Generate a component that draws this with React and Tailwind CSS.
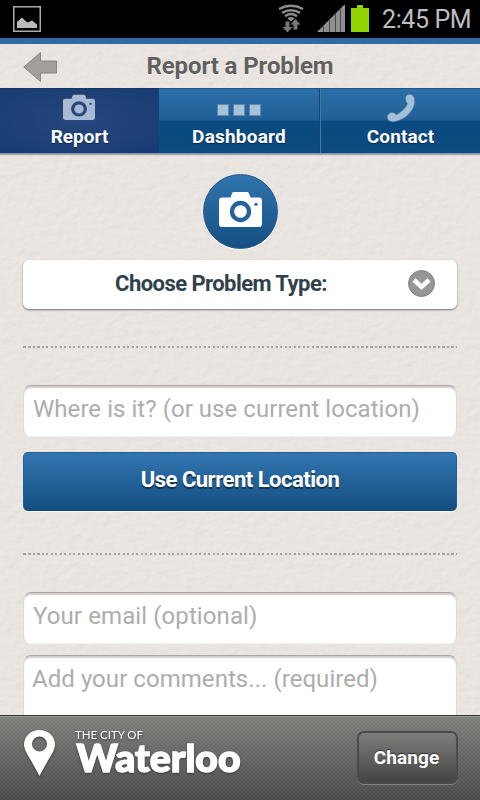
function Paper() {
  return (
    <svg className="pointer-events-none absolute inset-0 h-full w-full" aria-hidden="true">
      <filter id="paper" x="0" y="0" width="100%" height="100%" colorInterpolationFilters="sRGB">
        <feTurbulence type="fractalNoise" baseFrequency="0.11 0.15" numOctaves="3" seed="4" result="n" />
        <feDiffuseLighting in="n" lightingColor="#fffbf7" surfaceScale="0.7" diffuseConstant="1.02">
          <feDistantLight azimuth="235" elevation="65" />
        </feDiffuseLighting>
      </filter>
      <rect width="100%" height="100%" fill="#e9e4e0" />
      <rect width="100%" height="100%" filter="url(#paper)" opacity="0.18" />
    </svg>
  );
}

function Camera({ className, lens }) {
  return (
    <svg className={className} viewBox="0 0 43 35" preserveAspectRatio="none">
      <path
        fill="currentColor"
        d="M3 5.500h8.500l1.600-4.300Q13.500 0 15 0h13q1.500 0 1.900 1.200l1.600 4.300H40q3 0 3 3V32q0 3-3 3H3q-3 0-3-3V8.500q0-3 3-3Z"
      />
      <circle cx="21.500" cy="19.500" r="8.500" fill="none" stroke={lens} strokeWidth="4.300" />
      <circle cx="37" cy="12.300" r="1.600" fill={lens} />
    </svg>
  );
}

function StatusBar() {
  return (
    <div className="flex h-[38px] shrink-0 items-start bg-black">
      <svg className="ml-[13px] mt-[6px] h-[26px] w-[28px]" viewBox="0 0 28 26">
        <rect x="0.750" y="0.750" width="26.500" height="24.500" fill="none" stroke="#a9ada9" strokeWidth="1.500" />
        <path d="M4 22v-6l5-4.500 4 4 2 1 4-2 5 4V22Z" fill="#b9bbb9" />
      </svg>
      <svg className="ml-[235px] h-[38px] w-[98px]" viewBox="276 0 98 38">
        <g fill="none" stroke="#8c8c8c" strokeWidth="2.500">
          <path d="M279 9Q291 2.500 303 9" />
          <path d="M282 12.800Q291 7.500 300 12.800" />
          <path d="M285 16.200Q291 12 297 16.200" />
        </g>
        <path d="M287.300 18.300Q291 15.500 294.700 18.300L291 21.500Z" fill="#8c8c8c" />
        <path d="M285.500 21.500h4v5.500h3l-5 5.500-5-5.500h3Z M293.500 29.500v-5h-3l5-5.500 5 5.500h-3v5Z" fill="#777" />
        <path d="M317 32 344 5h1v27Z" fill="#8f8f8f" />
        <path d="M323.500 26v6M329.500 20v12M335.500 14v18M340.500 9v23" stroke="#4a4a4a" strokeWidth="1" />
        <path d="M351 8h6V5h6v3h6v24h-18Z" fill="#93d500" />
      </svg>
      <span className="ml-[8px] mt-[4px] whitespace-nowrap text-[25px] leading-[32px] tracking-[-0.4px] text-[#bebebe]">
        2:45 PM
      </span>
    </div>
  );
}

function Header() {
  return (
    <header className="relative flex h-[50px] shrink-0 items-center border-t-[6px] border-[#306ca3]">
      <svg className="absolute left-[23px] top-[8px] h-[30px] w-[35px]" viewBox="0 0 35 30">
        <path d="M.800 15 17.500.500v8.500h16v12h-16v8.500Z" fill="#a19e9c" stroke="#888583" strokeWidth="1" />
      </svg>
      <h1 className="w-full whitespace-nowrap text-center text-[24px] font-bold tracking-[-0.1px] text-[#62605e] [text-shadow:0_1px_0_#fff]">
        Report a Problem
      </h1>
    </header>
  );
}

function Tabs() {
  return (
    <nav className="relative flex h-[66px] shrink-0 border-b border-[#7b98b5] text-[19px] font-bold leading-[24px] text-white shadow-[0_1px_1px_#aaa5a1] [text-shadow:0_1px_1px_#06264a]">
      <div className="flex w-[159px] flex-col items-center border-t border-[#183566] bg-[radial-gradient(ellipse_at_center,#27477d,#173b73)]">
        <Camera className="mr-[2px] mt-[6px] h-[25px] w-[32px] text-[#a9b8d3] drop-shadow-[0_-1px_0_#4d5d78]" lens="#27477c" />
        <span className="mt-[5px]">Report</span>
      </div>
      <div className="flex w-[161px] flex-col items-center border-r border-t border-r-[#104777] border-t-[#1d5688] bg-[linear-gradient(#2c70aa_0,#1f5e95_31px,#084a80_32px,#0d4b80_100%)]">
        <div className="mt-[15px] flex gap-[4px]">
          <i className="h-[12px] w-[12px] border border-[#6687a6] bg-[#a8c2da]" />
          <i className="h-[12px] w-[12px] border border-[#6687a6] bg-[#a8c2da]" />
          <i className="h-[12px] w-[12px] border border-[#6687a6] bg-[#a8c2da]" />
        </div>
        <span className="mt-[9px] tracking-[0.2px]">Dashboard</span>
      </div>
      <div className="flex w-[160px] flex-col items-center border-l border-t border-l-[#4078a8] border-t-[#1d5688] bg-[linear-gradient(#2c70aa_0,#1f5e95_31px,#084a80_32px,#0d4b80_100%)]">
        <svg className="mt-[4px] h-[30px] w-[30px]" viewBox="0 0 30 30">
          <path
            d="M20.500 2.500C22.500.500 26.500 1 28 4 29.500 7.500 29 12.500 26 17 22.500 22.500 16.500 27 9.500 28.500 5.500 29.500 1.500 28 1.200 24.500 1 21 4.500 18.800 8 19.800L10.500 21.500C15 19.500 19.500 15 21.500 10.800L20 8.500C19 6.500 19.300 3.800 20.500 2.500Z"
            fill="#a4bfd8"
            stroke="#496f93"
            strokeWidth="0.700"
          />
        </svg>
        <span className="mt-[2px] tracking-[0.1px]">Contact</span>
      </div>
    </nav>
  );
}

function Field({ children, className }) {
  return (
    <div
      className={
        "shrink-0 whitespace-nowrap rounded-[8px] border border-[#dedad6] border-b-[#f3f1ef] border-t-[#aaa6a3] bg-white text-[24px] leading-[46px] text-[#adadad] shadow-[inset_0_2px_1px_#d0cfce] " +
        className
      }
    >
      {children}
    </div>
  );
}

function Rule() {
  return (
    <div className="h-[2px] shrink-0 bg-[repeating-linear-gradient(90deg,#a5a19e_0_2px,transparent_2px_4.500px)] [background-position:1px_0]" />
  );
}

function Footer() {
  return (
    <footer className="relative flex h-[85px] shrink-0 items-start overflow-hidden border-t border-[#353735] bg-[linear-gradient(#858582,#50504f)] shadow-[inset_0_1px_0_#9b9b99]">
      <svg className="absolute inset-0 h-full w-full" aria-hidden="true">
        <pattern id="weave" width="4" height="4" patternUnits="userSpaceOnUse">
          <path d="M0 0 2 2 4 0M0 4 2 2 4 4" fill="none" stroke="#000" strokeOpacity="0.060" />
        </pattern>
        <rect width="100%" height="100%" fill="url(#weave)" />
      </svg>
      <svg
        className="relative ml-[24px] mt-[14px] h-[47px] w-[220px] overflow-visible drop-shadow-[0_1px_1px_#393939]"
        viewBox="24 730 220 47"
      >
        <path
          fill="#fff"
          fillRule="evenodd"
          d="M39.500 730C30.500 730 24 736.500 24 744.500 24 751 29 756 39.500 776 50 756 55 751 55 744.500 55 736.500 48.500 730 39.500 730Zm0 6.500a7.500 7.500 0 1 1 0 15 7.500 7.500 0 0 1 0-15Z"
        />
        <text x="75" y="739" fill="#fff" fontSize="11.500" textLength="68" fontFamily="Lato, sans-serif">
          THE CITY OF
        </text>
        <text
          x="76.500"
          y="771.500"
          fill="#fff"
          stroke="#fff"
          strokeWidth="1.500"
          fontSize="38"
          fontWeight="900"
          textLength="164"
          lengthAdjust="spacingAndGlyphs"
          fontFamily="Lato, sans-serif"
        >
          Waterloo
        </text>
      </svg>
      <button className="relative ml-[113px] mt-[15px] h-[53px] w-[101px] rounded-[7px] border-2 border-[#4b4b4a] bg-[linear-gradient(#7d7d7b,#444443)] pr-[2px] pt-[1px] text-[19px] font-bold tracking-[0.1px] text-white shadow-[0_1px_0_0_#81817f] [text-shadow:0_-1px_1px_#333]">
        Change
      </button>
    </footer>
  );
}

export default function App() {
  return (
    <div className="relative h-[800px] w-[480px] overflow-hidden font-['Roboto',sans-serif]">
      <Paper />
      <div className="relative flex h-full flex-col">
        <StatusBar />
        <Header />
        <Tabs />
        <main className="flex min-h-0 grow flex-col overflow-hidden px-[23px]">
          <div className="mt-[20px] flex h-[75px] w-[75px] shrink-0 items-center justify-center self-center rounded-full border border-[#24598b] bg-[linear-gradient(#3074ae,#154f82)] shadow-[0_1px_0_#fff]">
            <Camera className="mb-[4px] h-[35px] w-[43px] text-white" lens="#22639b" />
          </div>
          <div className="relative mt-[11px] flex h-[49px] shrink-0 items-center rounded-[6px] bg-white shadow-[0_1px_2px_#77716e]">
            <span className="w-[396px] whitespace-nowrap pb-[2px] text-center text-[22px] font-bold tracking-[-0.550px] text-[#2f414b]">
              Choose Problem Type:
            </span>
            <svg className="absolute left-[385px] top-[10px] h-[27px] w-[27px]" viewBox="0 0 27 27">
              <circle cx="13.500" cy="13.500" r="13" fill="#969696" stroke="#818181" />
              <path d="m6 10 7.500 7L21 10" fill="none" stroke="#fff" strokeWidth="4.500" />
            </svg>
          </div>
          <div className="h-[37px] shrink-0" />
          <Rule />
          <div className="h-[37px] shrink-0" />
          <Field className="h-[52px] pl-[9px] tracking-[0.05px]">Where is it? (or use current location)</Field>
          <button className="mt-[15px] h-[59px] shrink-0 whitespace-nowrap rounded-[5px] border border-[#235e92] border-b-[#114777] bg-[linear-gradient(#3276b1,#144e80)] pb-[5px] text-[22px] font-bold tracking-[-0.500px] text-white shadow-[0_1px_0_#faf7f5] [text-shadow:0_2px_1px_#12324e]">
            Use Current Location
          </button>
          <div className="h-[42px] shrink-0" />
          <Rule />
          <div className="h-[37px] shrink-0" />
          <Field className="h-[52px] pl-[9px] tracking-[0.1px]">Your email (optional)</Field>
          <Field className="mt-[11px] h-[90px] pl-[8px] tracking-[0.05px]">Add your comments... (required)</Field>
        </main>
        <Footer />
      </div>
    </div>
  );
}
